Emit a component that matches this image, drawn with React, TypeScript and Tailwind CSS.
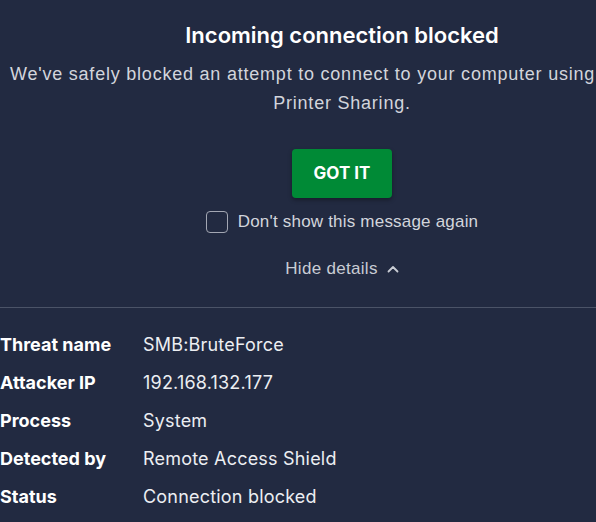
import React from "react";

const rows: [string, string][] = [
  ["Threat name", "SMB:BruteForce"],
  ["Attacker IP", "192.168.132.177"],
  ["Process", "System"],
  ["Detected by", "Remote Access Shield"],
  ["Status", "Connection blocked"],
];

export default function App() {
  return (
    <div className="w-[596px] h-[522px] overflow-hidden bg-[#222a41] relative" style={{ fontFamily: "Inter, 'Liberation Sans', sans-serif" }}>
      <div className="w-[684px] flex flex-col items-center">
        <h1 className="mt-[20px] h-[30px] leading-[30px] text-[22px] font-semibold text-white" style={{ fontFamily: "Inter, sans-serif" }}>
          Incoming connection blocked
        </h1>
        <div className="w-full mt-[10px] text-[18px] leading-[29px] tracking-[0.78px] text-[#d2d5dc]" style={{ fontFamily: "'Liberation Sans', Arial, sans-serif" }}>
          <div className="pl-[10px] whitespace-nowrap text-left">We've safely blocked an attempt to connect to your computer using</div>
          <div className="text-center">Printer Sharing.</div>
        </div>
        <button className="mt-[31px] w-[100px] h-[49px] rounded-[4px] bg-[#008a36] text-white text-[17px] font-bold shadow-[0_2px_4px_rgba(0,0,0,0.35)]" style={{ fontFamily: "Inter, sans-serif" }}>
          GOT IT
        </button>
        <div className="mt-[12px] flex items-center gap-[10px] h-[24px]">
          <span className="w-[22px] h-[22px] rounded-[4px] border border-[#a3a7b3]" />
          <span className="text-[17px] tracking-[0.2px] text-[#d2d5dc]" style={{ fontFamily: "'Liberation Sans', Arial, sans-serif" }}>Don't show this message again</span>
        </div>
        <div className="mt-[23px] flex items-center gap-[9px] h-[24px] text-[17px] tracking-[0.3px] text-[#c9ccd4]" style={{ fontFamily: "'Liberation Sans', Arial, sans-serif" }}>
          <span>Hide details</span>
          <svg width="12" height="8" viewBox="0 0 12 8" fill="none" stroke="#c9ccd4" strokeWidth="1.8" strokeLinecap="round" strokeLinejoin="round">
            <path d="M1.5 6.5 L6 2 L10.5 6.5" />
          </svg>
        </div>
      </div>
      <div className="mt-[26px] h-px bg-[#4b5367] w-full" />
      <div className="mt-[17px] grid grid-cols-[143px_1fr]">
        {rows.map(([k, v]) => (
          <React.Fragment key={k}>
            <div className="h-[38px] flex items-center text-[18px] font-bold text-white">{k}</div>
            <div className="h-[38px] flex items-center text-[18px] tracking-[0.2px] text-[#eceef2]">{v}</div>
          </React.Fragment>
        ))}
      </div>
    </div>
  );
}
